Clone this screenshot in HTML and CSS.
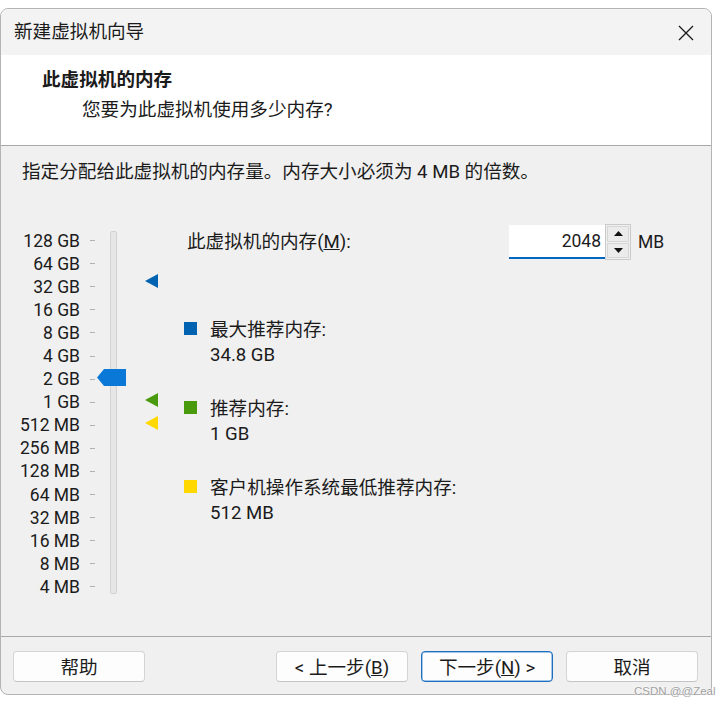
FILE: index.html
```html
<!DOCTYPE html>
<html lang="zh-CN">
<head>
<meta charset="utf-8">
<title>新建虚拟机向导</title>
<link rel="stylesheet" href="styles.css">
</head>
<body>
<div class="window">
  <div class="titlebar">
    <span class="title">新建虚拟机向导</span>
    <svg class="close" width="16" height="16" viewBox="0 0 16 16"><path d="M1 1 L15 15 M15 1 L1 15" stroke="#1a1a1a" stroke-width="1.3" fill="none"/></svg>
  </div>
  <div class="header">
    <div class="heading">此虚拟机的内存</div>
    <div class="subtitle">您要为此虚拟机使用多少内存?</div>
  </div>
  <div class="body">
    <div class="desc">指定分配给此虚拟机的内存量。内存大小必须为 4 MB 的倍数。</div>
    <div class="content">
      <div class="slider">
        <div class="scale">
          <div class="scale-row"><span class="scale-label">128 GB</span><span class="tick"></span></div>
          <div class="scale-row"><span class="scale-label">64 GB</span><span class="tick"></span></div>
          <div class="scale-row"><span class="scale-label">32 GB</span><span class="tick"></span></div>
          <div class="scale-row"><span class="scale-label">16 GB</span><span class="tick"></span></div>
          <div class="scale-row"><span class="scale-label">8 GB</span><span class="tick"></span></div>
          <div class="scale-row"><span class="scale-label">4 GB</span><span class="tick"></span></div>
          <div class="scale-row"><span class="scale-label">2 GB</span><span class="tick"></span></div>
          <div class="scale-row"><span class="scale-label">1 GB</span><span class="tick"></span></div>
          <div class="scale-row"><span class="scale-label">512 MB</span><span class="tick"></span></div>
          <div class="scale-row"><span class="scale-label">256 MB</span><span class="tick"></span></div>
          <div class="scale-row"><span class="scale-label">128 MB</span><span class="tick"></span></div>
          <div class="scale-row"><span class="scale-label">64 MB</span><span class="tick"></span></div>
          <div class="scale-row"><span class="scale-label">32 MB</span><span class="tick"></span></div>
          <div class="scale-row"><span class="scale-label">16 MB</span><span class="tick"></span></div>
          <div class="scale-row"><span class="scale-label">8 MB</span><span class="tick"></span></div>
          <div class="scale-row"><span class="scale-label">4 MB</span><span class="tick"></span></div>
        </div>
        <div class="track"></div>
        <svg class="thumb" width="29" height="17" viewBox="0 0 29 17"><polygon points="0,8.5 7,0 29,0 29,17 7,17" fill="#0a78d7"/></svg>
        <svg class="marker marker-max" width="13" height="14" viewBox="0 0 13 14"><polygon points="0,7 13,0 13,14" fill="#0063b1"/></svg>
        <svg class="marker marker-rec" width="13" height="14" viewBox="0 0 13 14"><polygon points="0,7 13,0 13,14" fill="#4a9a0e"/></svg>
        <svg class="marker marker-min" width="13" height="14" viewBox="0 0 13 14"><polygon points="0,7 13,0 13,14" fill="#ffd800"/></svg>
      </div>
      <div class="panel">
        <div class="field">
          <span class="field-label">此虚拟机的内存(<u>M</u>):</span>
          <div class="input">2048</div>
          <div class="spinner">
            <div class="spin-btn"><svg width="9" height="5" viewBox="0 0 9 5"><polygon points="0,5 4.5,0 9,5" fill="#111"/></svg></div>
            <div class="spin-btn"><svg width="9" height="5" viewBox="0 0 9 5"><polygon points="0,0 9,0 4.5,5" fill="#111"/></svg></div>
          </div>
          <span class="unit">MB</span>
        </div>
        <div class="legend-item first">
          <span class="swatch blue"></span>
          <div class="legend-text"><div>最大推荐内存:</div><div>34.8 GB</div></div>
        </div>
        <div class="legend-item">
          <span class="swatch green"></span>
          <div class="legend-text"><div>推荐内存:</div><div>1 GB</div></div>
        </div>
        <div class="legend-item">
          <span class="swatch yellow"></span>
          <div class="legend-text"><div>客户机操作系统最低推荐内存:</div><div>512 MB</div></div>
        </div>
      </div>
    </div>
  </div>
  <div class="footer">
    <div class="btn">帮助</div>
    <div class="spacer"></div>
    <div class="btn">&lt; 上一步(<u>B</u>)</div>
    <div class="btn primary">下一步(<u>N</u>) &gt;</div>
    <div class="btn">取消</div>
  </div>
</div>
<div class="watermark">CSDN @@Zeal</div>
</body>
</html>
```
FILE: styles.css
```css
* { box-sizing: border-box; }
html, body { margin: 0; padding: 0; }
body {
  background: #ffffff;
  font-family: Roboto, "Noto Sans CJK SC", sans-serif;
  font-size: 18.6px;
  color: #1b1b1b;
}
.window {
  margin-top: 8px;
  width: 712px;
  height: 687px;
  border: 1px solid #b4b4b4;
  border-radius: 8px;
  background: #f0f0f0;
  overflow: hidden;
  display: flex;
  flex-direction: column;
}
.titlebar {
  height: 46px;
  flex: none;
  background: #f3f3f3;
  display: flex;
  align-items: center;
  justify-content: space-between;
  padding: 0 17px 0 13px;
}
.title { line-height: 24px; }
.close { display: block; margin-top: 1px; }
.header {
  height: 91px;
  flex: none;
  background: #ffffff;
  border-bottom: 1px solid #a9a9a9;
  padding: 12px 0 0 41px;
}
.heading { font-weight: 700; line-height: 26px; }
.subtitle { line-height: 26px; margin-top: 4px; padding-left: 40px; }
.body {
  height: 491px;
  flex: none;
  border-bottom: 1px solid #a9a9a9;
  padding: 14px 0 0 0;
}
.desc { line-height: 24px; padding-left: 21px; }
.content {
  display: flex;
  margin-top: 40px;
}
.slider {
  position: relative;
  width: 183px;
  flex: none;
  display: flex;
  align-items: flex-start;
}
.scale { margin-top: 5px; }
.scale-row {
  display: flex;
  align-items: center;
  height: 23.1px;
}
.scale-label {
  width: 79px;
  text-align: right;
  font-size: 17.5px;
  line-height: 20px;
  white-space: nowrap;
}
.tick {
  width: 5px;
  height: 1px;
  background: #b0b0b0;
  margin-left: 10px;
}
.track {
  margin-left: 15px;
  margin-top: 7px;
  width: 7px;
  height: 363px;
  background: #e6e6e6;
  border: 1px solid #d2d2d2;
  border-radius: 2px;
}
.thumb { position: absolute; left: 96px; top: 145px; display: block; }
.marker { position: absolute; left: 144px; display: block; }
.marker-max { top: 50px; }
.marker-rec { top: 169px; }
.marker-min { top: 192px; }
.panel {
  display: flex;
  flex-direction: column;
}
.field {
  display: flex;
  align-items: center;
  height: 36px;
}
.field-label {
  width: 325px;
  padding-left: 3px;
  line-height: 24px;
  white-space: nowrap;
}
.input {
  width: 96px;
  height: 34px;
  background: #ffffff;
  border-bottom: 2px solid #0067c0;
  text-align: right;
  padding-right: 4px;
  font-size: 17.5px;
  line-height: 32px;
}
.spinner {
  width: 26px;
  height: 36px;
  border: 1px solid #cacaca;
  background: #f0f0f0;
  display: flex;
  flex-direction: column;
  padding: 1px;
  gap: 1px;
}
.spin-btn {
  flex: 1;
  background: #ebebeb;
  border: 1px solid #d6d6d6;
  display: flex;
  align-items: center;
  justify-content: center;
}
.spin-btn svg { display: block; }
.unit { margin-left: 7px; line-height: 24px; font-size: 17.5px; }
.legend-item {
  display: flex;
  align-items: flex-start;
  margin-top: 29px;
}
.legend-item.first { margin-top: 58px; }
.swatch {
  width: 13px;
  height: 13px;
  margin-top: 4px;
  margin-right: 13px;
  flex: none;
}
.swatch.blue { background: #0063b1; }
.swatch.green { background: #4a9a0e; }
.swatch.yellow { background: #ffd800; }
.legend-text div { line-height: 25px; white-space: nowrap; }
.footer {
  flex: 1;
  display: flex;
  align-items: flex-start;
  padding: 14px 13px 0 12px;
  gap: 13px;
}
.spacer { flex: 1; }
.btn {
  width: 132px;
  height: 31px;
  background: #fdfdfd;
  border: 1px solid #d4d4d4;
  border-bottom-color: #c4c4c4;
  border-radius: 4px;
  display: flex;
  align-items: center;
  justify-content: center;
  padding-top: 2px;
  line-height: 24px;
  white-space: nowrap;
}
.btn.primary {
  border: 1px solid #1f6fbf;
  box-shadow: inset 0 0 0 0.5px #4d8fd3;
}
.watermark {
  position: absolute;
  left: 634px;
  top: 685px;
  font-family: "Liberation Sans", sans-serif;
  font-size: 11.5px;
  color: #a0a0a0;
  text-shadow: 0 0 2px #fff, 0 0 1px #fff;
  white-space: nowrap;
}
```
